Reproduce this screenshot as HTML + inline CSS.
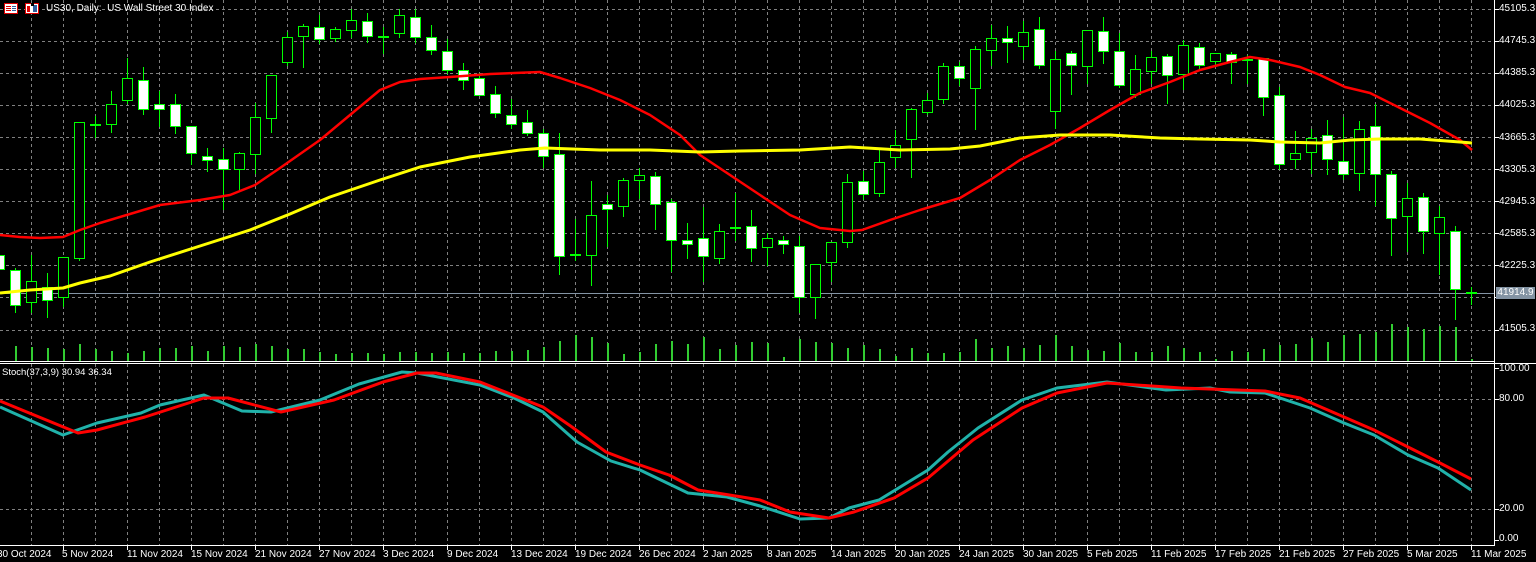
<!DOCTYPE html>
<html><head><meta charset="utf-8">
<style>
html,body{margin:0;padding:0;background:#000;width:1536px;height:562px;overflow:hidden}
#wrap{position:relative;width:1536px;height:562px;font-family:"Liberation Sans",sans-serif;color:#fff}
svg{position:absolute;left:0;top:0}
.t{position:absolute;font-size:10px;line-height:12px;white-space:nowrap;color:#fff}
.pl{left:1499px}
</style></head>
<body><div id="wrap">
<svg id="s" width="1536" height="562" xmlns="http://www.w3.org/2000/svg" shape-rendering="crispEdges"></svg>

<div class="t" style="left:46px;top:3px">US30, Daily:&nbsp; US Wall Street 30 Index</div>
<div class="t" style="left:2px;top:367px;font-size:9.5px">Stoch(37,3,9) 30.94 36.34</div>

<div class="t pl" style="top:3px">45105.3</div>
<div class="t pl" style="top:35px">44745.3</div>
<div class="t pl" style="top:67px">44385.3</div>
<div class="t pl" style="top:99px">44025.3</div>
<div class="t pl" style="top:132px">43665.3</div>
<div class="t pl" style="top:164px">43305.3</div>
<div class="t pl" style="top:196px">42945.3</div>
<div class="t pl" style="top:228px">42585.3</div>
<div class="t pl" style="top:260px">42225.3</div>
<div class="t pl" style="top:323px">41505.3</div>
<div class="t" style="left:1496px;top:287px;width:39px;height:12px;background:#8494a4;color:#fff;text-align:center;line-height:12px">41914.9</div>

<div class="t pl" style="top:363px">100.00</div>
<div class="t pl" style="top:393px">80.00</div>
<div class="t pl" style="top:503px">20.00</div>
<div class="t pl" style="top:533px">0.00</div>

<div class="t" style="left:-3px;top:549px">30 Oct 2024</div>
<div class="t" style="left:62px;top:549px">5 Nov 2024</div>
<div class="t" style="left:127px;top:549px">11 Nov 2024</div>
<div class="t" style="left:191px;top:549px">15 Nov 2024</div>
<div class="t" style="left:255px;top:549px">21 Nov 2024</div>
<div class="t" style="left:319px;top:549px">27 Nov 2024</div>
<div class="t" style="left:383px;top:549px">3 Dec 2024</div>
<div class="t" style="left:447px;top:549px">9 Dec 2024</div>
<div class="t" style="left:511px;top:549px">13 Dec 2024</div>
<div class="t" style="left:575px;top:549px">19 Dec 2024</div>
<div class="t" style="left:639px;top:549px">26 Dec 2024</div>
<div class="t" style="left:703px;top:549px">2 Jan 2025</div>
<div class="t" style="left:767px;top:549px">8 Jan 2025</div>
<div class="t" style="left:831px;top:549px">14 Jan 2025</div>
<div class="t" style="left:895px;top:549px">20 Jan 2025</div>
<div class="t" style="left:959px;top:549px">24 Jan 2025</div>
<div class="t" style="left:1023px;top:549px">30 Jan 2025</div>
<div class="t" style="left:1087px;top:549px">5 Feb 2025</div>
<div class="t" style="left:1151px;top:549px">11 Feb 2025</div>
<div class="t" style="left:1215px;top:549px">17 Feb 2025</div>
<div class="t" style="left:1279px;top:549px">21 Feb 2025</div>
<div class="t" style="left:1343px;top:549px">27 Feb 2025</div>
<div class="t" style="left:1407px;top:549px">5 Mar 2025</div>
<div class="t" style="left:1471px;top:549px">11 Mar 2025</div>
</div>
<script>
var s=document.getElementById('s'),h='';
function L(x1,y1,x2,y2,c,w,d){h+='<line x1="'+x1+'" y1="'+y1+'" x2="'+x2+'" y2="'+y2+'" stroke="'+c+'" stroke-width="'+(w||1)+'"'+(d?' stroke-dasharray="'+d+'"':'')+'/>';}
function R(x,y,w,hh,f,st){h+='<rect x="'+x+'" y="'+y+'" width="'+w+'" height="'+hh+'" fill="'+f+'"'+(st?' stroke="'+st+'" stroke-width="1"':'')+'/>';}
// grid
var G='#808080';
for(var k=0;k<11;k++){var y=Math.round(9+32.05*k)+0.5;L(0,y,1494,y,G,1,'3,3');}
for(var x=31.5;x<1494;x+=32){L(x,0,x,361,G,1,'3,3');L(x,364,x,545,G,1,'3,3');}
L(0,399.5,1494,399.5,G,1,'3,3');L(0,509.5,1494,509.5,G,1,'3,3');
// volume
var V=[346,347,348,349,344,349,351,353,351,348,348,346,351,346,347,344,346,349,349,352,354,353,353,354,352,352,353,352,353,353,351,351,350,347,341,335,337,343,354,352,344,341,344,337,349,345,342,343,357,339,342,343,348,345,349,356,348,353,353,352,339,348,346,348,345,335,346,350,351,343,352,352,346,348,352,359,351,352,349,345,344,338,342,335,334,332,324,327,329,326,327,359];
for(var i=0;i<V.length;i++){R(15+16*i,V[i],2,361-V[i],'#32cd32');}
// current price line
L(0,293.5,1494,293.5,'#8494a4',1);
// candles [type,top,bottom,high,low]
var C=[['w',255,269,252,270],['w',270,305,268,312],['b',281,302,255,312],['w',287,300,273,317],['b',257,297,257,306],['b',122,258,122,260],['d',124,124,116,137],['b',104,124,91,132],['b',78,100,58,103],['w',80,109,67,114],['w',104,109,91,126],['w',104,126,94,133],['w',126,153,126,164],['w',156,160,148,171],['w',159,169,148,209],['b',153,169,152,190],['b',117,154,103,173],['b',75,118,75,132],['b',37,62,32,65],['b',26,36,24,67],['w',27,39,15,43],['b',29,38,27,41],['b',20,30,9,37],['w',21,36,13,42],['d',36,36,27,53],['b',15,33,9,37],['w',17,37,9,42],['w',37,50,25,54],['w',51,70,39,73],['w',70,80,63,89],['w',78,95,73,95],['w',94,113,86,117],['w',115,124,99,128],['w',122,133,110,135],['w',133,156,129,167],['w',154,256,133,274],['d',254,254,219,260],['b',215,255,181,285],['w',204,209,195,246],['b',180,206,178,216],['b',175,180,168,198],['w',176,204,172,229],['w',202,240,199,271],['w',240,244,223,258],['w',238,256,207,281],['b',231,258,224,263],['d',227,227,193,240],['w',226,248,210,261],['b',238,247,233,265],['w',240,244,236,253],['w',246,297,236,312],['b',264,297,264,318],['b',242,262,242,281],['b',182,242,174,247],['w',181,194,171,199],['b',162,193,148,196],['b',145,157,130,167],['b',109,139,108,177],['b',100,112,93,114],['b',66,99,63,103],['w',66,78,62,85],['b',49,88,46,129],['b',38,50,25,65],['w',38,42,26,62],['b',32,46,21,59],['w',29,65,17,68],['b',59,111,51,128],['w',53,65,51,94],['b',30,66,30,83],['w',31,51,17,63],['w',51,85,33,87],['b',69,94,55,97],['b',57,71,51,83],['w',56,75,54,103],['b',45,74,40,89],['w',47,65,43,68],['b',53,61,53,65],['w',54,62,52,83],['d',59,59,55,83],['w',58,97,58,115],['w',95,164,87,169],['b',153,159,131,168],['b',138,152,129,173],['w',135,159,120,174],['w',161,174,117,179],['b',129,173,121,190],['w',126,174,104,205],['w',174,218,171,255],['b',198,216,183,251],['w',197,231,193,253],['b',217,233,206,274],['w',231,289,226,319],['d',292,292,287,304]];
var GR='#00ff00';
for(var j=0;j<C.length;j++){var c=C[j],cx=15+16*(j-1);
 L(cx+0.5,c[3],cx+0.5,c[4]+1,GR,1);
 if(c[0]=='d'){R(cx-5,c[1],11,2,GR);}
 else{R(cx-4.5,c[1]+0.5,10,Math.max(1,c[2]-c[1]),c[0]=='w'?'#fff':'#000',GR);}
}
function P(pts,col,w){var d='';for(var i=0;i<pts.length;i+=2)d+=(i?'L':'M')+pts[i]+' '+pts[i+1];h+='<path d="'+d+'" fill="none" stroke="'+col+'" stroke-width="'+w+'" stroke-linejoin="round" shape-rendering="auto"/>';}
P([0,235,20,237,40,238,63,237,80,230,100,223,130,214,160,205,200,200,230,195,255,185,280,168,320,140,350,115,380,90,400,82,420,79,450,77,490,74,540,72,560,78,590,88,620,100,650,115,680,135,700,155,730,175,760,195,790,215,820,228,850,231,862,230,890,220,920,210,960,198,990,180,1020,160,1050,145,1080,128,1110,110,1140,93,1170,82,1200,70,1230,62,1250,57,1270,60,1300,67,1320,75,1345,87,1370,93,1400,108,1430,123,1460,140,1472,150],'#ff0000',2.5);
P([0,293,30,290,63,288,80,283,110,276,150,262,200,246,250,230,290,214,330,197,380,180,420,167,470,157,520,150,545,148,600,150,650,150,700,152,740,151,800,150,850,147,900,150,950,149,980,146,1020,138,1060,135,1110,135,1160,138,1200,139,1250,140,1280,142,1320,143,1350,140,1380,139,1420,139,1460,142,1472,143],'#ffff00',3);
// stochastic
P([0,407,63,435,97,423,141,413,160,405,204,395,242,411,271,412,320,400,359,384,402,372,417,373,480,385,514,398,543,412,577,442,611,461,640,470,688,493,727,497,760,506,800,519,829,518,849,508,879,500,928,470,948,452,978,428,1022,400,1057,388,1107,382,1166,390,1210,388,1230,392,1265,393,1310,408,1344,423,1374,435,1408,455,1438,468,1471,490],'#20b2aa',3);
P([0,401,78,433,97,430,145,417,204,398,228,398,281,412,334,400,383,382,417,373,436,373,480,382,543,407,572,427,606,452,640,465,669,475,698,490,742,497,760,500,790,512,829,518,854,512,894,498,928,478,973,440,1022,408,1057,393,1107,383,1181,388,1265,391,1300,398,1344,417,1374,430,1404,445,1438,462,1471,479],'#ff0000',3);
// frame
L(1494.5,0,1494.5,546,'#fff',1);
L(0,361.5,1494,361.5,'#fff',1);L(0,363.5,1536,363.5,'#fff',1);
L(0,545.5,1495,545.5,'#fff',1);
for(var k=0;k<11;k++){var y=Math.round(9+32.05*k)+0.5;L(1494,y,1499,y,'#fff',1);}
[368.5,399.5,509.5,540.5].forEach(function(y){L(1494,y,1499,y,'#fff',1);});
for(var x=63.5;x<1494;x+=64){L(x,545,x,550,'#fff',1);}
// header icons
R(4.5,3.5,13,10,'#fff','#e00000');R(6,6,5,1,'#e00000');R(6,8,5,1,'#e00000');R(6,10,5,1,'#e00000');R(12,6,4,1,'#3060a0');R(12,8,4,1,'#3060a0');R(12,10,4,1,'#3060a0');
R(25.5,3.5,13,10,'#fff','#e00000');R(27,6,3,6,'#e00000');R(33,5,4,7,'#3060a0');R(31,3,3,3,'#000');
s.innerHTML=h;
</script>
</body></html>
